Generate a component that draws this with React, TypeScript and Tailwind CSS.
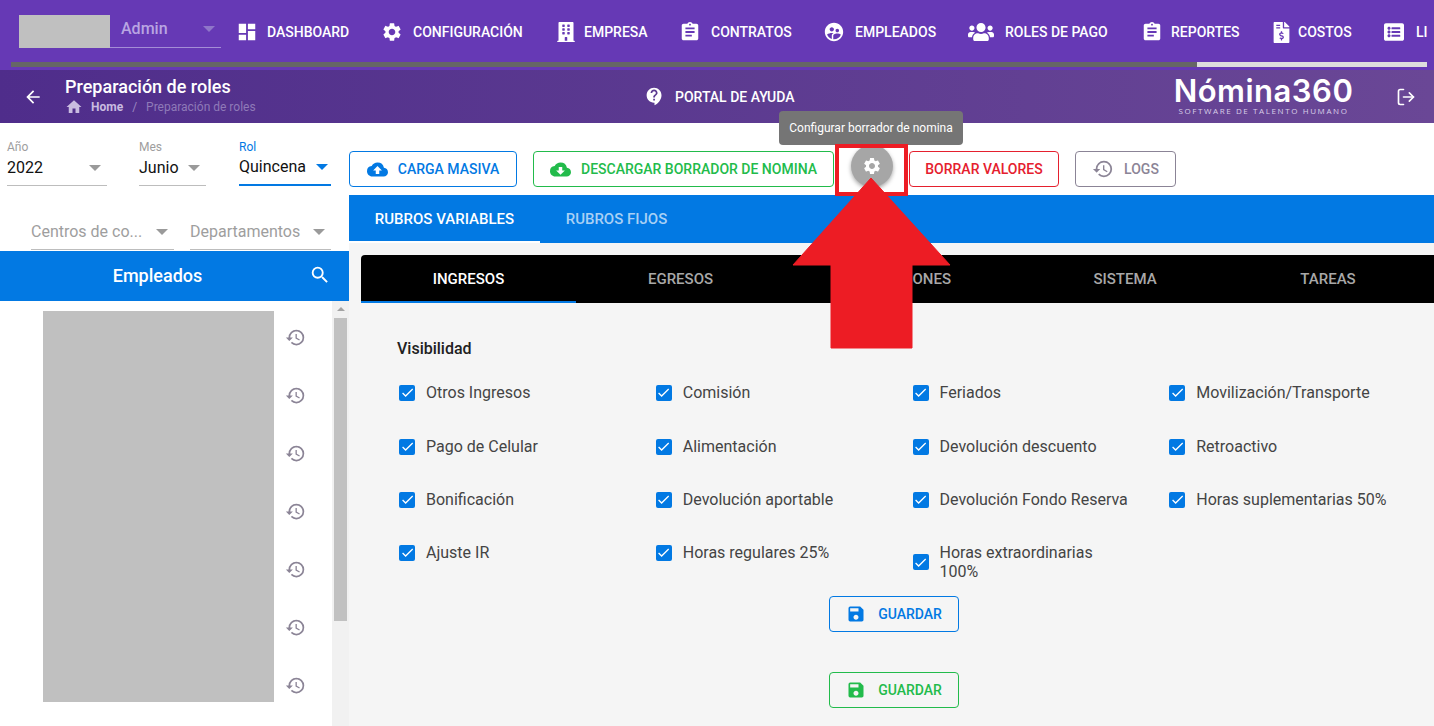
import { LogOut } from "lucide-react";
import { FaBuilding, FaFileInvoiceDollar, FaListAlt, FaUsers } from "react-icons/fa";
import {
  MdArrowBack,
  MdAssignment,
  MdCheck,
  MdCloudDownload,
  MdCloudUpload,
  MdContactSupport,
  MdDashboard,
  MdHistory,
  MdHome,
  MdSave,
  MdSearch,
  MdSettings,
  MdSupervisedUserCircle,
} from "react-icons/md";

const navItems = [
  { label: "DASHBOARD", box: "w-[31px]", pitch: "w-[145px]", icon: <MdDashboard size={22} /> },
  { label: "CONFIGURACIÓN", box: "w-[32px]", pitch: "w-[173px]", icon: <MdSettings size={22} /> },
  { label: "EMPRESA", box: "w-[30px]", pitch: "w-[125px]", icon: <FaBuilding size={20} className="ml-[2px]" /> },
  { label: "CONTRATOS", box: "w-[32px]", pitch: "w-[144px]", icon: <MdAssignment size={22} /> },
  { label: "EMPLEADOS", box: "w-[32px]", pitch: "w-[143px]", icon: <MdSupervisedUserCircle size={22} /> },
  { label: "ROLES DE PAGO", box: "w-[39px]", pitch: "w-[175px]", icon: <FaUsers size={26} className="ml-[2px]" /> },
  { label: "REPORTES", box: "w-[30px]", pitch: "w-[128px]", icon: <MdAssignment size={22} /> },
  { label: "COSTOS", box: "w-[29px]", pitch: "w-[113px]", icon: <FaFileInvoiceDollar size={21} className="ml-[2px]" /> },
  { label: "LI", box: "w-[34px]", pitch: "w-[60px]", icon: <FaListAlt size={20} className="ml-[2px]" /> },
];

const checks = [
  "Otros Ingresos", "Comisión", "Feriados", "Movilización/Transporte",
  "Pago de Celular", "Alimentación", "Devolución descuento", "Retroactivo",
  "Bonificación", "Devolución aportable", "Devolución Fondo Reserva", "Horas suplementarias 50%",
  "Ajuste IR", "Horas regulares 25%", "Horas extraordinarias 100%",
];

function Caret({ className }: { className: string }) {
  return <span className={`h-0 w-0 border-x-[6px] border-t-[6px] border-x-transparent ${className}`} />;
}

function Select(props: { label?: string; value: string; width: string; active?: boolean; muted?: boolean }) {
  return (
    <div className={`${props.width} shrink-0`}>
      {props.label && (
        <div className={`text-[12px] leading-[14px] ${props.active ? "text-[#0279e3]" : "text-[#9e9e9e]"}`}>{props.label}</div>
      )}
      <div className={`flex h-[32px] items-center justify-between pb-[4px] ${props.active ? "border-b-2 border-[#0279e3] pr-[3px]" : "border-b border-[#bdbdbd] pr-[6px]"}`}>
        <span className={`text-[16px] ${props.muted ? "text-[#9e9e9e]" : "text-[#111]"}`}>{props.value}</span>
        <Caret className={props.active ? "border-t-[#0279e3]" : "border-t-[#9a9a9a]"} />
      </div>
    </div>
  );
}

function OutlineButton(props: { label: string; icon?: React.ReactNode; color: string; width: string }) {
  return (
    <button className={`flex h-[36px] ${props.width} shrink-0 items-center justify-center gap-[10px] rounded-[4px] border bg-white text-[14px] font-medium ${props.color}`}>
      {props.icon}
      {props.label}
    </button>
  );
}

export default function App() {
  return (
    <div className="relative h-[726px] w-[1434px] overflow-hidden bg-white font-['Roboto',sans-serif]">
      {/* barra superior */}
      <div className="h-[70px] bg-[#6639b5] pt-[15px]">
        <div className="flex h-[33px] items-start whitespace-nowrap pl-[19px]">
          <div className="h-[33px] w-[91px] shrink-0 bg-[#c0c0c0]" />
          <div className="flex h-[33px] w-[111px] shrink-0 items-center justify-between border-b border-[#a48dd6] pl-[11px] pr-[6px] pb-[5px]">
            <span className="text-[16px] font-medium text-[#b9a5e2]">Admin</span>
            <Caret className="border-t-[#8f76c9]" />
          </div>
          <nav className="ml-[15px] flex shrink-0 items-center pt-[4px] text-[14px] font-medium text-white">
            {navItems.map((item) => (
              <div key={item.label} className={`flex shrink-0 items-center ${item.pitch}`}>
                <span className={`shrink-0 ${item.box}`}>{item.icon}</span>
                <span>{item.label}</span>
              </div>
            ))}
          </nav>
        </div>
        <div className="ml-[11px] mt-[14px] flex h-[5px] w-[1416px]">
          <div className="w-[1186px] bg-[#666666]" />
          <div className="flex-1 bg-[#dddddd]" />
        </div>
      </div>

      {/* migas */}
      <div className="flex h-[53px] items-center bg-gradient-to-r from-[#4f2d8b] to-[#6a4796] text-white">
        <MdArrowBack size={20} className="ml-[23px]" />
        <div className="ml-[22px] -mt-[1px] w-[579px]">
          <div className="text-[18px] font-medium leading-[21px]">Preparación de roles</div>
          <div className="mt-[1px] flex items-center text-[12px] leading-[18px]">
            <MdHome size={18} className="text-[#c9bce0]" />
            <span className="ml-[8px] font-bold text-[#c9bce0]">Home</span>
            <span className="mx-[9px] text-[#9c87c2]">/</span>
            <span className="text-[#8f7ab8]">Preparación de roles</span>
          </div>
        </div>
        <MdContactSupport size={21} />
        <span className="ml-[10px] w-[498px] pt-[2px] text-[14px] font-medium">PORTAL DE AYUDA</span>
        <div className="flex w-[181px] -mt-[3px] flex-col items-center">
          <span className="font-['Inter',sans-serif] text-[31px] font-semibold leading-[31px] tracking-[0.5px]">Nómina360</span>
          <span className="font-['Open_Sans',sans-serif] text-[8px] leading-[9px] tracking-[1.6px] text-[#d8cfe8]">SOFTWARE DE TALENTO HUMANO</span>
        </div>
        <LogOut size={20} className="ml-[42px]" />
      </div>

      <div className="flex">
        {/* panel izquierdo */}
        <aside className="w-[349px] shrink-0">
          <div className="flex h-[128px] flex-col">
            <div className="flex pl-[7px] pt-[17px]">
              <Select label="Año" value="2022" width="w-[100px]" />
              <div className="w-[32px]" />
              <Select label="Mes" value="Junio" width="w-[67px]" />
              <div className="w-[33px]" />
              <Select label="Rol" value="Quincena" width="w-[92px]" active />
            </div>
            <div className="flex pl-[31px] pt-[32px]">
              <Select value="Centros de co..." width="w-[143px]" muted />
              <div className="w-[16px]" />
              <Select value="Departamentos" width="w-[141px]" muted />
            </div>
          </div>
          <div className="relative flex h-[50px] items-center justify-center bg-[#0279e3] pb-[2px] pr-[34px] text-[18px] font-medium text-white">
            Empleados
            <MdSearch size={22} className="absolute right-[18px] top-[13px]" />
          </div>
          <div className="flex h-[425px]">
            <div className="w-[43px]" />
            <div className="mt-[10px] h-[391px] w-[231px] bg-[#c0c0c0]" />
            <div className="flex w-[58px] flex-col items-center pr-[16px] pt-[26px]">
              {[0, 1, 2, 3, 4, 5, 6].map((i) => (
                <div key={i} className="flex h-[58px] shrink-0 items-start text-[#8b8496]">
                  <MdHistory size={21} />
                </div>
              ))}
            </div>
            <div className="relative flex w-[17px] flex-col items-center bg-[#f1f1f1] pt-[6px]">
              <span className="h-0 w-0 border-x-[4px] border-b-[4px] border-x-transparent border-b-[#a3a3a3]" />
              <div className="mt-[7px] h-[303px] w-[13px] bg-[#c1c1c1]" />
            </div>
          </div>
        </aside>

        {/* contenido */}
        <main className="w-[1085px]">
          <div className="flex h-[72px] items-start pt-[28px]">
            <OutlineButton label="CARGA MASIVA" width="w-[168px]" color="border-[#0279e3] text-[#0279e3]" icon={<MdCloudUpload size={21} />} />
            <div className="w-[16px]" />
            <OutlineButton label="DESCARGAR BORRADOR DE NOMINA" width="w-[301px]" color="border-[#22bb4b] text-[#22bb4b]" icon={<MdCloudDownload size={21} />} />
            <div className="flex h-[36px] w-[75px] shrink-0 justify-center">
              <div className="-mt-[6px] flex h-[42px] w-[42px] shrink-0 items-center justify-center rounded-full bg-[#a6a6a6] text-white shadow-[0_2px_4px_rgba(0,0,0,0.35)]">
                <MdSettings size={20} />
              </div>
            </div>
            <OutlineButton label="BORRAR VALORES" width="w-[150px]" color="border-[#e5202e] text-[#e5202e]" />
            <div className="w-[16px]" />
            <OutlineButton label="LOGS" width="w-[101px]" color="border-[#8b8496] text-[#8b8496]" icon={<MdHistory size={22} />} />
          </div>

          <div className="flex h-[48px] bg-[#0279e3] text-[15px] font-medium">
            <div className="flex w-[191px] items-center justify-center border-b-2 border-white pt-[2px] text-white">RUBROS VARIABLES</div>
            <div className="flex w-[153px] items-center justify-center text-[#a8d0f5]">RUBROS FIJOS</div>
          </div>

          <div className="h-[483px] bg-[#f5f5f5] pl-[12px] pt-[12px]">
            <div className="flex h-[48px] rounded-tl-[4px] bg-black text-[15px] font-medium text-[#a8a8a8]">
              <div className="flex w-[215px] items-center justify-center border-b-2 border-[#0279e3] pt-[2px] text-white">INGRESOS</div>
              <div className="flex w-[209px] items-center justify-center">EGRESOS</div>
              <div className="flex w-[237px] items-center justify-center">PROVISIONES</div>
              <div className="flex w-[206px] items-center justify-center">SISTEMA</div>
              <div className="flex w-[200px] items-center justify-center">TAREAS</div>
            </div>

            <div className="pl-[36px] pt-[36px]">
              <div className="text-[16px] font-medium leading-[19px] text-[#212121]">Visibilidad</div>
              <div className="mt-[25px] grid h-[213px] w-[1027px] grid-cols-4 grid-rows-[54px_53px_53px_53px] text-[16px] leading-[19px] text-[#444444]">
                {checks.map((label) => (
                  <label key={label} className="flex items-center self-start pl-[2px]">
                    <span className="flex h-[16px] w-[16px] shrink-0 items-center justify-center rounded-[2px] bg-[#0279e3] text-white">
                      <MdCheck size={15} />
                    </span>
                    <span className="ml-[11px] w-[195px]">{label}</span>
                  </label>
                ))}
              </div>
              <div className="flex flex-col pl-[432px]">
                <button className="flex h-[36px] w-[130px] items-center justify-center gap-[12px] rounded-[4px] border border-[#0279e3] text-[14px] font-medium text-[#0279e3]">
                  <MdSave size={20} />
                  GUARDAR
                </button>
                <button className="mt-[40px] flex h-[36px] w-[130px] items-center justify-center gap-[12px] rounded-[4px] border border-[#22bb4b] text-[14px] font-medium text-[#22bb4b]">
                  <MdSave size={20} />
                  GUARDAR
                </button>
              </div>
            </div>
          </div>
        </main>
      </div>

      {/* anotaciones encima de la captura */}
      <div className="absolute left-[779px] top-[111px] flex h-[34px] w-[184px] items-center justify-center rounded-[4px] bg-[#757575] text-[12px] text-white">
        Configurar borrador de nomina
      </div>
      <div className="absolute left-[835px] top-[144px] h-[52px] w-[73px] border-[4px] border-[#ed1c24]" />
      <svg className="absolute left-[790px] top-[175px]" width="164" height="176" viewBox="0 0 164 176">
        <path d="M81 3 L160 90 H122 V173 H41 V90 H3 Z" fill="#ed1c24" stroke="#ed1c24" strokeWidth="1" strokeLinejoin="round" />
      </svg>
    </div>
  );
}
